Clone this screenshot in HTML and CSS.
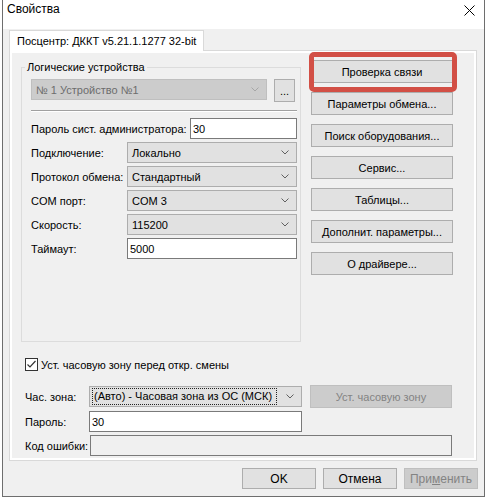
FILE: index.html
```html
<!DOCTYPE html>
<html lang="ru">
<head>
    <meta charset="UTF-8">
    <title>Свойства</title>
    <link rel="stylesheet" href="styles.css">
</head>
<body>
    <div class="window">
        <div class="titlebar">
            <span class="title">Свойства</span>
            <svg class="close" width="11" height="11" viewBox="0 0 11 11">
                <path d="M0.5 0.5 L10.5 10.5 M10.5 0.5 L0.5 10.5" stroke="#000" stroke-width="1"/>
            </svg>
        </div>

        <div class="client">
            <div class="tab">Посцентр: ДККТ v5.21.1.1277 32-bit</div>

            <div class="tab-body">
                <div class="page">
                    <div class="top">
                        <!-- Logical devices -->
                        <fieldset class="group">
                            <legend>Логические устройства</legend>
                            <div class="dev-row">
                                <div class="combo disabled dev-combo">
                                    <span class="combo-text">№ 1 Устройство №1</span>
                                    <svg class="chev" width="8" height="5" viewBox="0 0 8 5"><polyline points="0.5,0.5 4,4 7.5,0.5" fill="none" stroke="#a6a6a6"/></svg>
                                </div>
                                <button class="btn dots">...</button>
                            </div>
                            <div class="sep"></div>

                            <div class="field-row admin">
                                <span class="lbl">Пароль сист. администратора:</span>
                                <div class="edit">30</div>
                            </div>
                            <div class="field-row">
                                <span class="lbl">Подключение:</span>
                                <div class="combo">
                                    <span class="combo-text">Локально</span>
                                    <svg class="chev" width="8" height="5" viewBox="0 0 8 5"><polyline points="0.5,0.5 4,4 7.5,0.5" fill="none" stroke="#606060"/></svg>
                                </div>
                            </div>
                            <div class="field-row">
                                <span class="lbl">Протокол обмена:</span>
                                <div class="combo">
                                    <span class="combo-text">Стандартный</span>
                                    <svg class="chev" width="8" height="5" viewBox="0 0 8 5"><polyline points="0.5,0.5 4,4 7.5,0.5" fill="none" stroke="#606060"/></svg>
                                </div>
                            </div>
                            <div class="field-row">
                                <span class="lbl">COM порт:</span>
                                <div class="combo">
                                    <span class="combo-text">COM 3</span>
                                    <svg class="chev" width="8" height="5" viewBox="0 0 8 5"><polyline points="0.5,0.5 4,4 7.5,0.5" fill="none" stroke="#606060"/></svg>
                                </div>
                            </div>
                            <div class="field-row">
                                <span class="lbl">Скорость:</span>
                                <div class="combo">
                                    <span class="combo-text">115200</span>
                                    <svg class="chev" width="8" height="5" viewBox="0 0 8 5"><polyline points="0.5,0.5 4,4 7.5,0.5" fill="none" stroke="#606060"/></svg>
                                </div>
                            </div>
                            <div class="field-row">
                                <span class="lbl">Таймаут:</span>
                                <div class="edit">5000</div>
                            </div>
                        </fieldset>

                        <!-- Action buttons -->
                        <div class="actions">
                            <div class="marked">
                                <button class="btn">Проверка связи</button>
                                <div class="highlight"></div>
                            </div>
                            <button class="btn">Параметры обмена...</button>
                            <button class="btn">Поиск оборудования...</button>
                            <button class="btn">Сервис...</button>
                            <button class="btn">Таблицы...</button>
                            <button class="btn">Дополнит. параметры...</button>
                            <button class="btn">О драйвере...</button>
                        </div>
                    </div>

                    <div class="bottom">
                        <div class="check-row">
                            <span class="checkbox">
                                <svg width="11" height="11" viewBox="0 0 11 11"><polyline points="1.5,5.5 4,8 9.5,2" fill="none" stroke="#333" stroke-width="1.2"/></svg>
                            </span>
                            <span>Уст. часовую зону перед откр. смены</span>
                        </div>

                        <div class="tz-grid">
                            <span class="lbl">Час. зона:</span>
                            <div class="combo focus">
                                <span class="focus-text">(Авто) - Часовая зона из ОС (МСК)</span>
                                <svg class="chev" width="8" height="5" viewBox="0 0 8 5"><polyline points="0.5,0.5 4,4 7.5,0.5" fill="none" stroke="#606060"/></svg>
                            </div>
                            <button class="btn disabled tz-btn">Уст. часовую зону</button>

                            <span class="lbl">Пароль:</span>
                            <div class="edit">30</div>
                            <span></span>

                            <span class="lbl">Код ошибки:</span>
                            <div class="edit readonly error-box"></div>
                        </div>
                    </div>
                </div>
            </div>

            <div class="footer">
                <button class="btn foot">OK</button>
                <button class="btn foot">Отмена</button>
                <button class="btn foot disabled">При<u>м</u>енить</button>
            </div>
        </div>
    </div>
</body>
</html>
```

FILE: styles.css
```css
body {
    margin: 0;
    background: #fff;
    font-family: "Liberation Sans", Arial, sans-serif;
    font-size: 11px;
    color: #000;
}
.window {
    margin-left: 2px;
    width: 483px;
    height: 497px;
    box-sizing: border-box;
    border: 1px solid #6e6e6e;
    border-top: none;
    background: #f0f0f0;
    display: flex;
    flex-direction: column;
}
.titlebar {
    height: 29px;
    box-sizing: border-box;
    background: #fff;
    display: flex;
    justify-content: space-between;
    align-items: flex-start;
    padding: 2px 9px 0 4px;
    font-size: 12px;
}
.close {
    margin-top: 3px;
}
.client {
    flex: 1;
    display: flex;
    flex-direction: column;
    padding: 1px 6px 0 6px;
}
.tab {
    position: relative;
    z-index: 1;
    width: 195px;
    height: 21px;
    box-sizing: border-box;
    margin-bottom: -1px;
    padding-left: 7px;
    border: 1px solid #d9d9d9;
    border-bottom: none;
    background: #fff;
    font-size: 11px;
    line-height: 20px;
    white-space: nowrap;
}
.tab-body {
    width: 468px;
    height: 411px;
    box-sizing: border-box;
    border: 1px solid #d9d9d9;
    background: #fff;
    padding: 2px;
}
.page {
    height: 100%;
    background: #f0f0f0;
}
.top {
    display: flex;
    align-items: flex-start;
    padding-left: 9px;
}
.group {
    margin: 8px 0 0 0;
    width: 280px;
    height: 281px;
    min-width: 0;
    box-sizing: border-box;
    border: 1px solid #dcdcdc;
    padding: 5px 3px 0 9px;
}
.group legend {
    padding: 0 2px;
    margin-left: -6px;
    line-height: 13px;
}
.dev-row {
    display: flex;
    gap: 7px;
}
.dev-combo {
    width: 236px;
    flex: none;
}
.dots {
    width: 21px;
    height: 21px;
    line-height: 12px;
}
.sep {
    height: 1px;
    margin: 8px 0 6px;
    background: #a0a0a0;
    border-bottom: 1px solid #fff;
}
.field-row {
    display: flex;
    align-items: center;
    height: 21px;
    margin-bottom: 3px;
}
.field-row .lbl {
    width: 96px;
    flex: none;
}
.field-row.admin .lbl {
    width: 159px;
}
.field-row .combo,
.field-row .edit {
    flex: 1;
}
.combo,
.edit {
    height: 21px;
    box-sizing: border-box;
    display: flex;
    align-items: center;
}
.combo {
    background: #e1e1e1;
    border: 1px solid #adadad;
    padding: 0 7px 0 4px;
}
.combo-text {
    flex: 1;
    white-space: nowrap;
}
.combo.disabled {
    background: #cccccc;
    border-color: #bfbfbf;
    color: #6d6d6d;
}
.edit {
    background: #fff;
    border: 1px solid #7a7a7a;
    padding: 0 2px;
}
.edit.readonly {
    background: #f0f0f0;
}
.btn {
    height: 23px;
    box-sizing: border-box;
    padding: 0;
    background: #e1e1e1;
    border: 1px solid #adadad;
    font: inherit;
    color: #000;
}
.btn.disabled {
    background: #cccccc;
    border-color: #bfbfbf;
    color: #838383;
}
.actions {
    width: 142px;
    margin: 7px 0 0 10px;
    display: flex;
    flex-direction: column;
    gap: 9px;
}
.marked {
    position: relative;
}
.marked .btn {
    width: 100%;
}
.highlight {
    position: absolute;
    left: -2px;
    top: -8px;
    width: 148px;
    height: 40px;
    box-sizing: border-box;
    border: 5px solid #d24f45;
    border-radius: 5px;
}
.bottom {
    margin: 16px 0 0 13px;
}
.check-row {
    display: flex;
    align-items: center;
    gap: 3px;
    height: 13px;
}
.checkbox {
    width: 13px;
    height: 13px;
    box-sizing: border-box;
    border: 1px solid #333;
    background: #fff;
    display: flex;
}
.tz-grid {
    margin-top: 14px;
    display: grid;
    grid-template-columns: 64px 213px 150px;
    grid-template-rows: 23px 21px 21px;
    row-gap: 3px;
    align-items: center;
}
.tz-btn {
    width: 142px;
    justify-self: end;
}
.combo.focus {
    padding: 0 7px 0 2px;
}
.focus-text {
    flex: 1;
    height: 17px;
    line-height: 15px;
    box-sizing: border-box;
    border: 1px dotted #222;
    padding-left: 1px;
    margin-right: 9px;
    white-space: nowrap;
}
.error-box {
    grid-column: 2 / 4;
    margin-left: 1px;
}
.footer {
    display: flex;
    justify-content: flex-end;
    gap: 7px;
    margin-top: 7px;
}
.btn.foot {
    width: 74px;
    height: 21px;
    font-size: 12px;
}
```
